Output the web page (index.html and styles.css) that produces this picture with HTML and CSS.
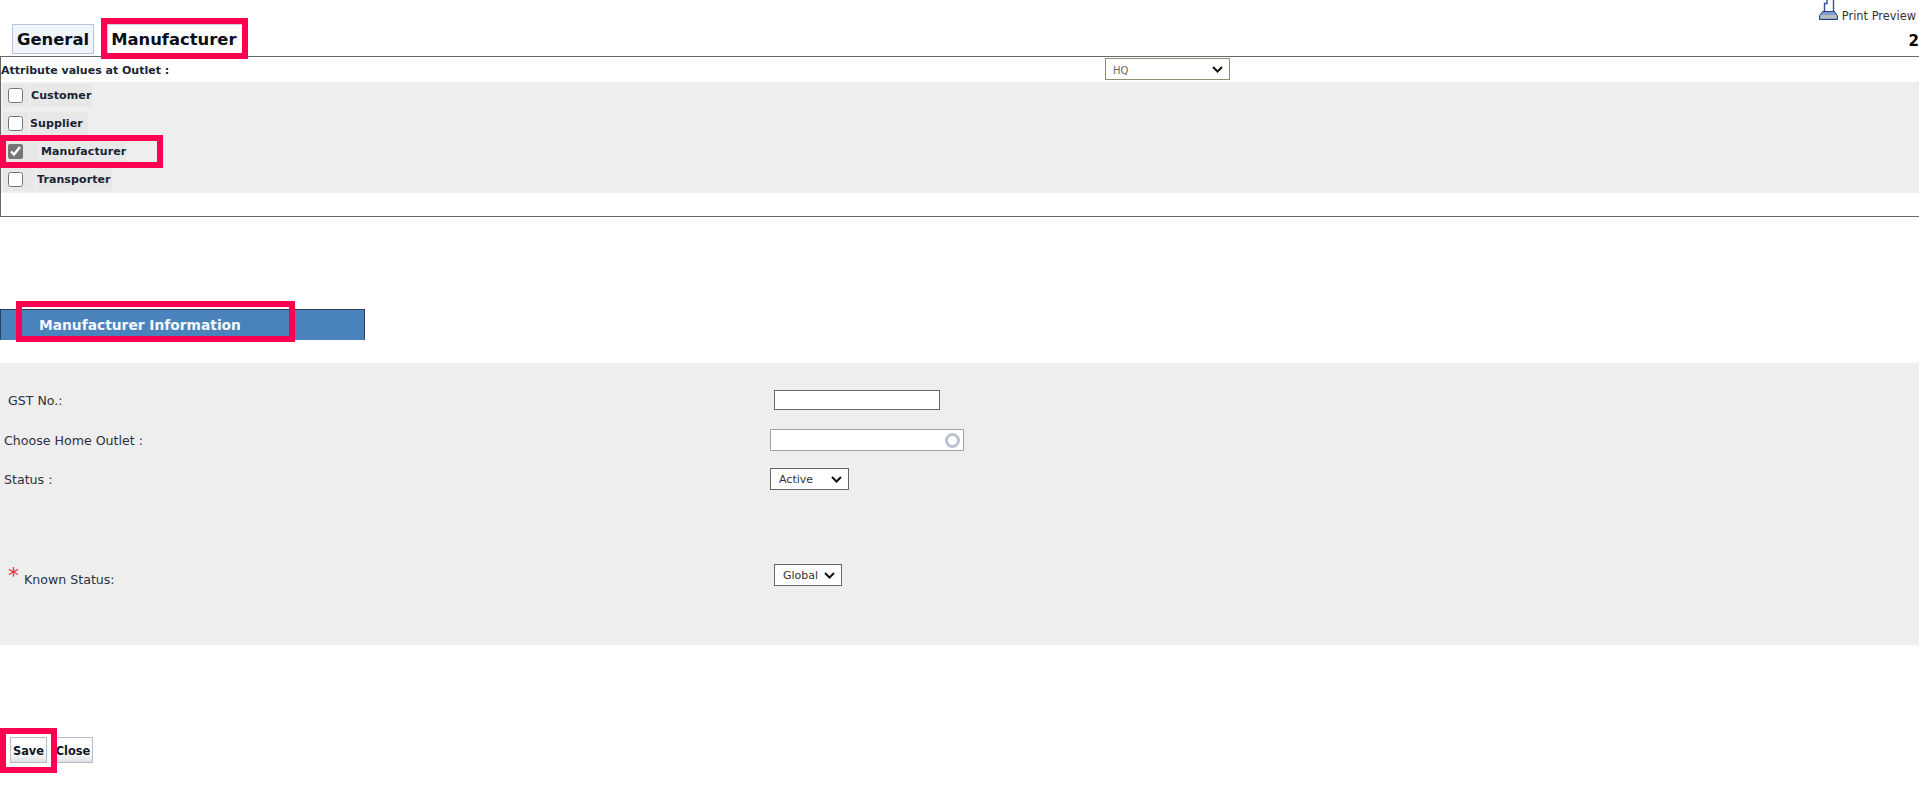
FILE: index.html
```html
<!DOCTYPE html>
<html>
<head>
	<meta charset="utf-8">
	<title>Manufacturer</title>
	<link rel="stylesheet" href="styles.css">
</head>
<body>
<div id="page">

	<!--top tabs-->
	<div class="tabbar">
		<div class="tabs">
			<a class="tab">General</a>
			<a class="tab active mark-wrap">Manufacturer<i class="mark mark-tab"></i></a>
		</div>
		<div class="tools">
			<div class="print">
				<svg width="19" height="20" viewBox="0 0 19 20">
					<path d="M5.5 13V3.5H8V-1H14.5V13Z" fill="#fff" stroke="#2f4f9f" stroke-width="1.4"/>
					<path d="M3.5 11.5H15.5L18.5 16V19.5H.5V16Z" fill="#7f9cd2" stroke="#27407f" stroke-width="1"/>
					<rect x="1.5" y="15" width="16" height="3.5" fill="#bcbcbc"/>
				</svg>
				<span>Print Preview</span>
			</div>
			<div class="pageno">2</div>
		</div>
	</div>

	<!--attribute box-->
	<div class="attr">
		<div class="outlet">
			<b>Attribute values at Outlet :</b>
			<select class="sel-hq"><option>HQ</option></select>
		</div>
		<div class="checks">
			<div class="chk-row">
				<span class="cell w26"><input type="checkbox"></span><span class="cell lbl w61">Customer</span>
			</div>
			<div class="chk-row">
				<span class="cell w25"><input type="checkbox"></span><span class="cell lbl w58">Supplier</span>
			</div>
			<div class="chk-row mark-wrap">
				<span class="cell w36"><input type="checkbox" checked></span><span class="cell lbl w85">Manufacturer</span>
				<i class="mark mark-chk"></i>
			</div>
			<div class="chk-row">
				<span class="cell w32"><input type="checkbox"></span><span class="cell lbl w75">Transporter</span>
			</div>
		</div>
	</div>

	<!--section title-->
	<div class="section mark-wrap">
		Manufacturer Information
		<i class="mark mark-sec"></i>
	</div>

	<!--form-->
	<div class="form">
		<div class="row row-gst">
			<label class="pad8">GST No.:</label>
			<input type="text" class="txt">
		</div>
		<div class="row row-home">
			<label>Choose Home Outlet :</label>
			<div class="lookup"><i class="ring"></i></div>
		</div>
		<div class="row row-status">
			<label>Status :</label>
			<select class="sel-status"><option>Active</option></select>
		</div>
		<div class="row row-known">
			<label class="pad8 known"><span class="star">*</span>Known Status:</label>
			<select class="sel-known"><option>Global</option></select>
		</div>
	</div>

	<!--buttons-->
	<div class="btns">
		<a class="btn save mark-wrap">Save<i class="mark mark-save"></i></a>
		<a class="btn close">Close</a>
	</div>

</div>
</body>
</html>
```

FILE: styles.css
```css
html,body{
	margin:0; padding:0; background:#fff;
}
body{
	font-family:"DejaVu Sans",Verdana,sans-serif; font-size:11px; color:#1b2433;
}
#page{
	width:1919px; height:799px; overflow:hidden;
}
.mark-wrap{
	position:relative;
}
.mark{
	position:absolute; display:block;
	border:6px solid #ff0050;
}

/*tabs*/
.tabbar{
	height:56px;
	display:flex; justify-content:space-between;
}
.tabs{
	padding:24px 0 0 12px;
	display:flex; gap:13px;
}
.tab{
	height:28px; padding:0 4px;
	background:#f0f4fb; border:1px solid #b8c4dc;
	font-size:16.4px; font-weight:bold; line-height:30px; color:#0a0f18;
}
.tab.active{
	padding:0 5px 0 3px;
	background:#fff; border-color:#c9cfe0;
}
.mark-tab{
	left:-7px; top:-7px; width:135px; height:29px;
}
.tools{
	display:flex; flex-direction:column; align-items:flex-end;
}
.print{
	height:20px; margin-right:3px;
	display:flex; align-items:flex-end; gap:4px;
	font-size:11.4px; color:#333;
}
.print svg{
	display:block;
}
.print span{
	line-height:12px; margin-bottom:-2px;
}
.pageno{
	margin-top:13px; margin-right:0;
	font-size:15px; font-weight:bold; line-height:16px; color:#000;
}

/*attribute box*/
.attr{
	height:159px; width:1925px;
	border:1px solid #666;
}
.outlet{
	height:25px;
	display:flex; align-items:center;
}
.outlet b{
	width:1105px; padding-top:1px;
	font-size:11px;
}
select{
	appearance:none; font-family:"DejaVu Sans",sans-serif;
	background-color:#fff; background-repeat:no-repeat;
	background-image:url("data:image/svg+xml,%3Csvg xmlns='http://www.w3.org/2000/svg' width='11' height='7'%3E%3Cpath d='M1 1l4.5 4.5L10 1' fill='none' stroke='%23111' stroke-width='2'/%3E%3C/svg%3E");
	background-position:right 6px center;
}
.sel-hq{
	width:125px; height:22px; margin:-1px 0 0 -1px; padding:2px 0 0 7px;
	border:1px solid #8f8f70;
	font-size:10px; color:#666;
}
.checks{
	height:111px; padding-top:2px; box-sizing:border-box;
	background:#eee;
}
.chk-row{
	height:23px; margin-bottom:5px; padding-left:2px;
	display:flex; gap:2px; width:max-content;
}
.cell{
	height:23px; background:#e8e8e8;
	display:flex; align-items:center;
}
.cell input{
	width:15px; height:15px; margin:0 0 0 5px;
	accent-color:#767676;
}
.lbl{
	font-size:11px; font-weight:bold; letter-spacing:0.1px;
}
.w25{width:25px;} .w26{width:26px;} .w32{width:32px;} .w36{width:36px;}
.w58{width:58px;} .w61{width:61px;} .w75{width:75px;} .w85{width:85px;}
.mark-chk{
	left:-1px; top:-5px; width:151px; height:21px;
}

/*section title*/
.section{
	width:365px; height:31px; margin-top:92px; padding-left:38px; box-sizing:border-box;
	background:#4a83bb; border:1px solid #2b3f5c; border-bottom:1px solid #4a83bb;
	font-size:13.8px; font-weight:bold; line-height:30px; color:#f4f7fb;
}
.mark-sec{
	left:15px; top:-9px; width:267px; height:29px;
}

/*form*/
.form{
	height:282px; margin-top:23px; padding-top:27px; box-sizing:border-box;
	background:#eee;
}
.row{
	display:flex; align-items:center;
}
.row label{
	width:770px; padding:0 0 0 4px; box-sizing:border-box;
	font-size:12.6px; color:#2a3140;
}
.row label.pad8{
	padding-left:8px;
}
.row label.known{
	padding-top:7px;
}
.row-gst{
	height:20px;
}
.row-home{
	height:22px; margin-top:19px;
}
.row-status{
	height:22px; margin-top:17px;
}
.row-known{
	height:22px; margin-top:74px;
}
.txt{
	width:166px; height:20px; margin:0 0 0 4px; padding:0; box-sizing:border-box;
	background:#fff; border:1px solid #666;
}
.lookup{
	width:194px; height:22px; box-sizing:border-box; padding-right:3px;
	background:#fff; border:1px solid #a3a3a3;
	display:flex; align-items:center; justify-content:flex-end;
}
.ring{
	width:15px; height:15px; box-sizing:border-box;
	border:3px solid #bcc3d2; border-radius:50%;
}
.sel-status,.sel-known{
	height:22px; box-sizing:border-box; padding-left:8px;
	border:1px solid #666;
	font-size:11px; color:#333;
}
.sel-status{
	width:79px;
}
.sel-known{
	width:68px; margin-left:4px;
}
.star{
	display:inline-block; margin-right:5px;
	font-size:22px; color:#e8323c; line-height:10px; vertical-align:1px;
}

/*buttons*/
.btns{
	margin-top:92px; padding-left:10px;
	display:flex; gap:4px;
}
.btn{
	height:24px; box-sizing:content-box;
	background:linear-gradient(#fff 55%,#dfe1e5);
	border:1px solid #b5bccb;
	font-size:11.4px; font-weight:bold; line-height:27px; color:#10151f;
}
.save{
	width:35px; text-align:center;
}
.close{
	width:38px; padding-left:2px; text-align:center;
}
.mark-save{
	left:-11px; top:-10px; width:45px; height:33px;
}
```
